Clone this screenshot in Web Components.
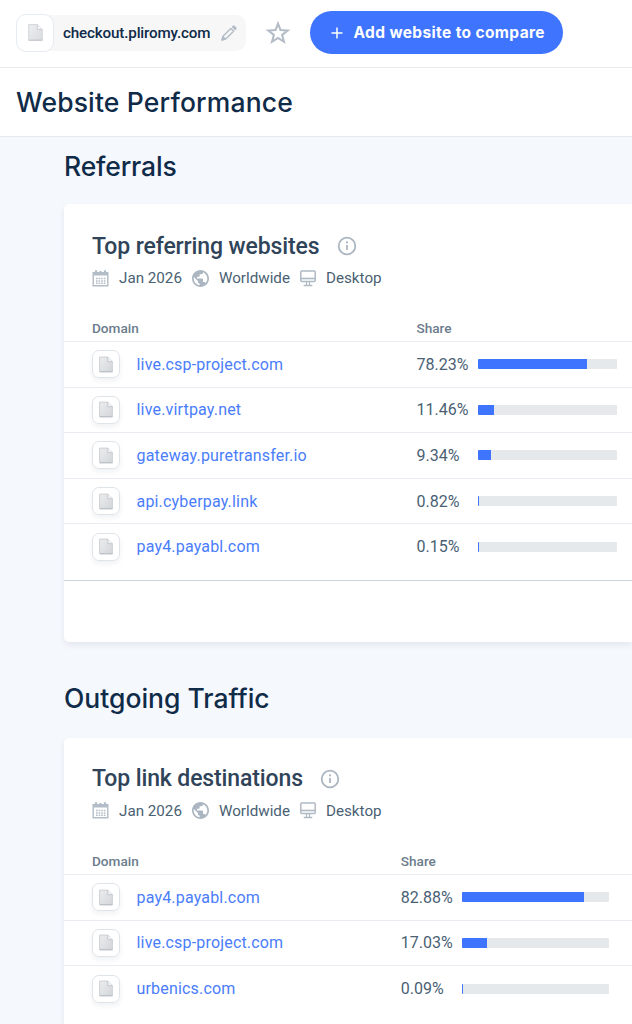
<!DOCTYPE html>
<html lang="en">
<head>
<meta charset="utf-8">
<title>Website Performance</title>
<style>
  html, body { margin: 0; height: 1024px; overflow: hidden; }
  body {
    background: #f5f8fd;
    color: #102b48;
    font-family: Roboto, sans-serif;
    --blue: #3e74fe;
    --display: Inter, sans-serif;
  }
</style>
</head>
<body>
<top-bar domain="checkout.pliromy.com">Add website to compare</top-bar>
<page-title>Website Performance</page-title>

<traffic-section heading="Referrals" style="--head-height: 67.3px; --heading-spacing: -0.15px">
  <traffic-card heading="Top referring websites" style="--share-x: 324.5px; --bar-width: 139.7px; height: 437.4px">
    <share-row domain="live.csp-project.com" share="78.23"></share-row>
    <share-row domain="live.virtpay.net" share="11.46"></share-row>
    <share-row domain="gateway.puretransfer.io" share="9.34"></share-row>
    <share-row domain="api.cyberpay.link" share="0.82"></share-row>
    <share-row domain="pay4.payabl.com" share="0.15"></share-row>
    <card-footer slot="footer"></card-footer>
  </traffic-card>
</traffic-section>

<traffic-section heading="Outgoing Traffic" style="--head-height: 96px; --head-top: 27px">
  <traffic-card heading="Top link destinations" style="--share-x: 308.8px; --bar-width: 147.5px; --head-pad: 25px; --head-box: 111.4px; height: 286px; border-radius: 5px 0 0 0">
    <share-row domain="pay4.payabl.com" share="82.88"></share-row>
    <share-row domain="live.csp-project.com" share="17.03"></share-row>
    <share-row domain="urbenics.com" share="0.09"></share-row>
  </traffic-card>
</traffic-section>

<script>
const icons = {
  page: `<svg viewBox="0 0 14 16" width="100%" height="100%">
    <defs><linearGradient id="g" x1="0" y1="0" x2="1" y2="1"><stop offset="0" stop-color="#eceded"/><stop offset="1" stop-color="#d2d6da"/></linearGradient></defs>
    <path d="M.6.6h8.2l4.6 4.6v10.2H.6z" fill="url(#g)" stroke="#c9cdd2" stroke-width=".9"/>
    <path d="M8.8.6v4.6h4.6" fill="#f4f5f6" stroke="#bfc4ca" stroke-width=".9"/>
    <path d="M1 15.2h12.4" stroke="#b9bfc5" stroke-width="1"/></svg>`,
  pencil: `<svg viewBox="0 0 16 16" width="16" height="16" fill="none" stroke="#b3bcc6" stroke-width="1.4" stroke-linejoin="round">
    <path d="M1.200 14.800l1-3.800L9.800 3.400l2.800 2.800L5 13.800z"/><path d="M1 15l.9-3.200 2.300 2.300z" fill="#b3bcc6"/><path d="M11.600 1.900l.6-.6q.5-.4 1 0l1.500 1.500q.4.500 0 1l-.6.6z" fill="#b3bcc6"/></svg>`,
  star: `<svg viewBox="0 0 24 24" width="26" height="26"><path fill="none" stroke="#b3bcc6" stroke-width="1.900" d="M12 3.300l2.300 6 6.600.4-5.100 4.100 1.700 6.300-5.500-3.500-5.500 3.500 1.700-6.300-5.100-4.100 6.600-.4z"/></svg>`,
  plus: `<svg viewBox="0 0 12 12" width="12" height="12"><path d="M6 .5v11M.5 6h11" stroke="#fff" stroke-width="1.500"/></svg>`,
  info: `<svg viewBox="0 0 20 20" width="20" height="20"><circle cx="10" cy="10" r="8.300" fill="none" stroke="#abb6c1" stroke-width="1.800"/><path d="M10 9v5" stroke="#abb6c1" stroke-width="1.800"/><circle cx="10" cy="6.400" r="1.100" fill="#abb6c1"/></svg>`,
  calendar: `<svg viewBox="0 0 17 17" width="17" height="17" fill="none" stroke="#b3bdc7">
    <path d="M1.200 2.800h14.600v13H1.200z" stroke-width="1.400"/><path d="M1 4.600h15M1 3.200h15" stroke-width="1.800"/><path d="M4 .3v3M13 .3v3M8.500 1v2" stroke-width="2.200"/>
    <path d="M4 8.500h9.500M4 11h9.500M4 13.300h9.500" stroke-width="1.500" stroke-dasharray="1.600 1"/></svg>`,
  globe: `<svg viewBox="2 2 20 20" width="17" height="17"><path fill="#abb6c1" d="M12 2C6.480 2 2 6.480 2 12s4.480 10 10 10 10-4.480 10-10S17.520 2 12 2zm-1 17.930c-3.950-.49-7-3.850-7-7.930 0-.62.080-1.210.210-1.790L9 15v1c0 1.100.9 2 2 2v1.930zm6.900-2.540c-.26-.81-1-1.390-1.900-1.390h-1v-3c0-.55-.45-1-1-1H8v-2h2c.55 0 1-.45 1-1V7h2c1.100 0 2-.9 2-2v-.41c2.930 1.190 5 4.060 5 7.410 0 2.080-.8 3.970-2.100 5.390z"/></svg>`,
  desktop: `<svg viewBox="0 0 16 17" width="16" height="17" fill="none" stroke="#b0bac4" stroke-width="1.500">
    <rect x=".8" y="1.100" width="14.400" height="10.500" rx="1"/><path d="M1 8.500h14" stroke-width="1.600"/><path d="M6.500 11.500v3.500M9.500 11.500v3.500" stroke-width="1.200"/><path d="M3.700 15.500h8.600"/></svg>`
};

class TopBar extends HTMLElement {
  constructor() {
    super();
    this.attachShadow({ mode: "open" });
  }

  connectedCallback() {
    this.shadowRoot.innerHTML = `
      <style>
        :host {
          display: flex; align-items: center; box-sizing: border-box; height: 68px;
          padding: 0 16px 2px; background: #fff; border-bottom: 1px solid #e9ebed;
        }
        .site { display: flex; align-items: center; width: 230px; height: 36px; border-radius: 10px; background: #f7f7f8; }
        .favicon {
          display: grid; place-items: center; box-sizing: border-box; width: 38px; height: 38px;
          border: 1px solid #e6ebf1; border-radius: 10px; background: #fff;
        }
        .favicon span { width: 15px; height: 17px; opacity: .85; }
        .name {
          width: 148px; margin-left: 9px; margin-right: 10px;
          font-size: 15.200px; font-weight: 500; letter-spacing: -.16px; white-space: nowrap;
        }
        .star { margin: 0 18.500px 0 19px; }
        svg { display: block; }
        button {
          display: flex; align-items: center; gap: 11px; box-sizing: border-box; width: 253px; height: 43px; padding: 0 0 0 21px;
          border: 0; border-radius: 22px; background: var(--blue); color: #fff; white-space: nowrap;
          font: 700 15.500px var(--display); letter-spacing: .37px;
        }
      </style>
      <div class="site">
        <div class="favicon"><span>${icons.page}</span></div>
        <div class="name">${this.getAttribute("domain")}</div>
        ${icons.pencil}
      </div>
      <div class="star">${icons.star}</div>
      <button>${icons.plus}<slot></slot></button>
    `;
  }
}

class PageTitle extends HTMLElement {
  constructor() {
    super();
    this.attachShadow({ mode: "open" });
  }

  connectedCallback() {
    this.shadowRoot.innerHTML = `
      <style>
        :host {
          display: flex; align-items: center; box-sizing: border-box; height: 69px;
          padding: 0 16px 1px; background: #fff; border-bottom: 1px solid #e6e9ed;
        }
        h1 { margin: 0; font: 450 26.500px var(--display); letter-spacing: .16px; white-space: nowrap; }
      </style>
      <h1><slot></slot></h1>
    `;
  }
}

class TrafficSection extends HTMLElement {
  constructor() {
    super();
    this.attachShadow({ mode: "open" });
  }

  connectedCallback() {
    this.shadowRoot.innerHTML = `
      <style>
        :host { display: block; padding-left: 64px; }
        header { box-sizing: border-box; height: var(--head-height); padding-top: var(--head-top, 0); }
        h2 {
          margin: 0; padding-top: 9px; font: 450 26.500px/40px var(--display);
          letter-spacing: var(--heading-spacing, 0); white-space: nowrap;
        }
      </style>
      <header><h2>${this.getAttribute("heading")}</h2></header>
      <slot></slot>
    `;
  }
}

class TrafficCard extends HTMLElement {
  constructor() {
    super();
    this.attachShadow({ mode: "open" });
  }

  connectedCallback() {
    this.shadowRoot.innerHTML = `
      <style>
        :host {
          display: flex; flex-direction: column; box-sizing: border-box;
          background: #fff; border-radius: 5px 0 0 5px; box-shadow: 0 3px 6px rgba(14, 30, 62, .08);
        }
        .head { box-sizing: border-box; height: var(--head-box, 112px); padding: var(--head-pad, 26px) 28px 0; }
        .title { display: flex; align-items: center; gap: 17.500px; height: 32px; }
        h3 { margin: 0; color: #2f4459; font-size: 23px; font-weight: 500; letter-spacing: -.12px; white-space: nowrap; }
        .meta { display: flex; align-items: center; height: 32px; color: #4a5f73; font-size: 15.200px; white-space: nowrap; }
        .meta span { margin: 0 10px; }
        .columns {
          display: grid; grid-template-columns: var(--share-x) auto; align-items: center; box-sizing: border-box;
          height: 25px; padding: 0 28px 2px; color: #6b7c8c; font-size: 13.600px; font-weight: 500;
        }
        svg { display: block; }
      </style>
      <div class="head">
        <div class="title"><h3>${this.getAttribute("heading")}</h3>${icons.info}</div>
        <div class="meta">
          ${icons.calendar}<span>Jan 2026</span>
          ${icons.globe}<span>Worldwide</span>
          ${icons.desktop}<span>Desktop</span>
        </div>
      </div>
      <div class="columns"><div>Domain</div><div>Share</div></div>
      <slot></slot>
      <slot name="footer"></slot>
    `;
  }
}

class ShareRow extends HTMLElement {
  constructor() {
    super();
    this.attachShadow({ mode: "open" });
  }

  connectedCallback() {
    const share = this.getAttribute("share");
    this.shadowRoot.innerHTML = `
      <style>
        :host {
          display: grid; grid-template-columns: 44.500px calc(var(--share-x) - 44.500px) 61px var(--bar-width);
          align-items: center; box-sizing: border-box; height: 45.600px; padding: 0 0 0 28px;
          border-top: 1px solid #e9edf1; font-size: 16px;
        }
        .favicon {
          display: grid; place-items: center; box-sizing: border-box; width: 28px; height: 28px;
          border: 1px solid #dfe4e9; border-radius: 7px; box-shadow: 0 3px 5px rgba(14, 30, 62, .06);
        }
        .favicon span { width: 14px; height: 17px; }
        svg { display: block; }
        a { color: #4a7dfb; letter-spacing: .18px; }
        .value { color: #4a5f73; }
        .bar { height: 10px; border-radius: 1px; background: #e6e9ec; overflow: hidden; }
        .fill { width: ${share}%; min-width: 1px; height: 100%; background: var(--blue); }
      </style>
      <div class="favicon"><span>${icons.page}</span></div>
      <a>${this.getAttribute("domain")}</a>
      <div class="value">${share}%</div>
      <div class="bar"><div class="fill"></div></div>
    `;
  }
}

class CardFooter extends HTMLElement {
  constructor() {
    super();
    this.attachShadow({ mode: "open" });
    this.shadowRoot.innerHTML = `
      <style>
        :host { display: block; margin-top: 11px; height: 61px; border-top: 1px solid #cbd3db; }
      </style>
    `;
  }
}

customElements.define("top-bar", TopBar);
customElements.define("page-title", PageTitle);
customElements.define("traffic-section", TrafficSection);
customElements.define("traffic-card", TrafficCard);
customElements.define("share-row", ShareRow);
customElements.define("card-footer", CardFooter);
</script>
</body>
</html>
